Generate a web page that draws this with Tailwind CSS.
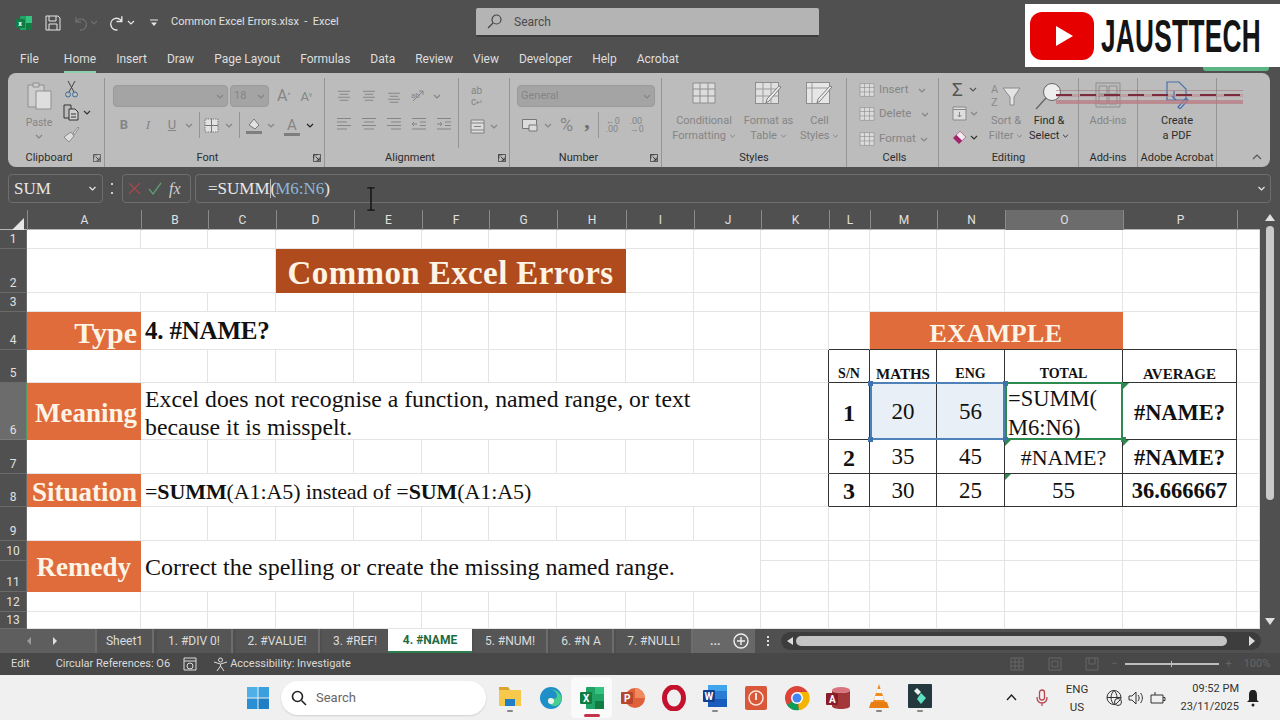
<!DOCTYPE html>
<html lang="en">
<head>
  <meta charset="UTF-8" />
  <title>Common Excel Errors.xlsx - Excel</title>
  <script src="https://cdn.jsdelivr.net/npm/@tailwindcss/browser@4"></script>
</head>
<body class="relative h-[720px] w-[1280px] overflow-hidden bg-[#505050] [font-family:Roboto,sans-serif] text-[12px] text-[#e2e2e2]">

<svg class="absolute h-0 w-0">
  <symbol id="chev" viewBox="0 0 8 5"><path d="M1 1l3 3 3-3" fill="none" stroke="currentColor" stroke-width="1.2"/></symbol>
  <symbol id="launch" viewBox="0 0 9 9"><path d="M.5.5h8v8h-8z M5 1H1v4" fill="none" stroke="currentColor" stroke-width=".8"/><path d="M3 3l4 4M7 4v3H4" fill="none" stroke="currentColor"/></symbol>
  <symbol id="tbl" viewBox="0 0 24 22"><path d="M1 1h22v20H1z" fill="#dcdcdc" stroke="#8d8d8d"/><path d="M1 7h22M1 14h22M8 1v20M16 1v20" stroke="#8d8d8d" fill="none"/></symbol>
  <symbol id="lines" viewBox="0 0 16 14"><path d="M1 1.5h14M1 5h10M1 8.500h14M1 12h10" stroke="currentColor" stroke-width="1.100" fill="none"/></symbol>
  <symbol id="linec" viewBox="0 0 16 14"><path d="M1 1.5h14M3 5h10M1 8.500h14M3 12h10" stroke="currentColor" stroke-width="1.100" fill="none"/></symbol>
  <symbol id="liner" viewBox="0 0 16 14"><path d="M1 1.5h14M5 5h10M1 8.500h14M5 12h10" stroke="currentColor" stroke-width="1.100" fill="none"/></symbol>
</svg>

<!-- title bar -->
<header class="flex h-[44px] items-center pt-[1px]">
  <svg class="ml-[16px] h-[16px] w-[16px]" viewBox="0 0 16 16"><rect x="4" y="1" width="12" height="14" rx="1" fill="#21a366"/><rect x="10" y="1" width="6" height="7" fill="#33c481"/><rect x="10" y="8" width="6" height="7" fill="#107c41"/><rect y="4" width="9" height="9" rx="1" fill="#107c41"/><text x="2.200" y="11" font-size="7" font-weight="700" fill="#fff">x</text></svg>
  <svg class="ml-[13px] h-[16px] w-[16px] text-[#e6e6e6]" viewBox="0 0 16 16" fill="none" stroke="currentColor"><path d="M1 1h12l2 2v12H1z M4 1v5h7V1 M4 15v-6h8v6"/></svg>
  <svg class="ml-[13px] h-[16px] w-[14px] text-[#6f6f6f]" viewBox="0 0 14 16" fill="none" stroke="currentColor" stroke-width="1.300"><path d="M2 2v5h5M2 7a5.500 5.500 0 1 1 4 8"/></svg>
  <svg class="ml-[2px] h-[5px] w-[8px] text-[#6f6f6f]"><use href="#chev"/></svg>
  <svg class="ml-[11px] h-[17px] w-[15px] text-[#e6e6e6]" viewBox="0 0 14 16" fill="none" stroke="currentColor" stroke-width="1.300"><path d="M12 2v5H7M12 7a5.500 5.500 0 1 0-4 8"/></svg>
  <svg class="ml-[3px] h-[5px] w-[8px] text-[#e6e6e6]"><use href="#chev"/></svg>
  <svg class="ml-[15px] h-[8px] w-[8px] text-[#e6e6e6]" viewBox="0 0 8 8"><path d="M0 1h8" stroke="currentColor"/><path d="M1 3.500h6L4 7z" fill="currentColor"/></svg>
  <span class="ml-[13px] w-[305px] text-[11px] whitespace-pre text-[#e0e0e0]">Common Excel Errors.xlsx  -  Excel</span>
  <div class="flex h-[29px] w-[343px] items-center rounded-[2px] border-b-2 border-[#3c3c3c] bg-[#b4b4b4] text-[12px] text-[#4a4a4a]">
    <svg class="ml-[11px] h-[15px] w-[15px]" viewBox="0 0 15 15" fill="none" stroke="#444" stroke-width="1.200"><circle cx="9.500" cy="5.500" r="4.500"/><path d="M6 9l-5 5"/></svg>
    <span class="ml-[12px]">Search</span>
  </div>
</header>

<!-- logo sits over the window corner -->
<div class="absolute left-[1203px] top-[60px] h-[11px] w-[66px] rounded-b-[3px] bg-[#5cb585]"></div>
<div class="absolute left-[1025px] top-[4px] flex h-[63px] w-[255px] items-center overflow-hidden bg-white">
  <svg class="ml-[5px] h-[48px] w-[64px] shrink-0" viewBox="0 0 64 48"><rect width="64" height="48" rx="12" fill="#e60000"/><path d="M26 14l17 10-17 10z" fill="#fff"/></svg>
  <span class="ml-[7px] shrink-0 origin-left scale-x-[0.57] text-[46px] leading-none font-bold tracking-[0.5px] whitespace-nowrap text-[#141414] [font-family:'Liberation_Sans',sans-serif]">JAUSTTECH</span>
</div>

<!-- tabs -->
<nav class="flex h-[29px] items-center gap-[20px] pl-[20px] pt-[1px] text-[12px] text-[#dedede]">
  <span class="mr-[5px]">File</span>
  <span class="relative">Home<span class="absolute -bottom-[5px] left-0 h-[2px] w-full bg-[#8fd0ac]"></span></span>
  <span>Insert</span><span>Draw</span><span>Page Layout</span><span>Formulas</span><span>Data</span><span>Review</span><span>View</span><span>Developer</span><span>Help</span><span>Acrobat</span>
</nav>

<!-- ribbon -->
<section class="relative mx-[8px] flex h-[94px] w-[1262px] rounded-[8px] bg-[#bcbcbc] pt-[5px] text-[11px] text-[#858585]">

  <div class="flex w-[97px] shrink-0 flex-col border-r border-[#959595]">
    <div class="flex h-[73px]">
      <div class="ml-[8px] flex w-[46px] flex-col items-center">
        <svg class="mt-[4px] h-[28px] w-[28px]" viewBox="0 0 28 28" fill="none" stroke="#8f8f8f"><path d="M3 3h16v22H3z" fill="#cdcdcd"/><path d="M8 1h6v4H8z" fill="#cdcdcd"/><path d="M11 9h15v18H11z" fill="#dedede"/></svg>
        <span class="mt-[6px] text-[10.500px] leading-[14px]">Paste</span>
        <svg class="mt-[4px] h-[5px] w-[8px]"><use href="#chev"/></svg>
      </div>
      <div class="flex flex-col pl-[1px]">
        <svg class="mt-[2px] h-[18px] w-[17px] text-[#444]" viewBox="0 0 17 18" fill="none" stroke="currentColor"><path d="M5 1l6 11M12 1l-6 11"/><circle cx="5" cy="14.500" r="2.500" stroke="#3f6d99"/><circle cx="12" cy="14.500" r="2.500" stroke="#3f6d99"/></svg>
        <div class="mt-[6px] flex items-center gap-[4px]">
          <svg class="h-[17px] w-[16px] text-[#333]" viewBox="0 0 16 17" fill="none" stroke="currentColor"><path d="M1 1h7v13H1z"/><path d="M6 5h6l3 3v8H6z" fill="#cfcfcf"/><path d="M8 10h5M8 13h5"/></svg>
          <svg class="h-[5px] w-[8px] text-[#333]"><use href="#chev"/></svg>
        </div>
        <svg class="mt-[5px] h-[17px] w-[17px]" viewBox="0 0 17 17" fill="#dedede" stroke="#8c8c8c"><path d="M10 7l5-6 1 1-5 7z"/><path d="M1 11l7-5 3 4-5 6z"/></svg>
      </div>
    </div>
    <div class="relative h-[14px] pr-[14px] text-center leading-[14px] text-[#2c2c2c]">Clipboard
      <svg class="absolute right-[3px] top-[3px] h-[8px] w-[8px] text-[#444]"><use href="#launch"/></svg>
    </div>
  </div>

  <div class="flex w-[220px] shrink-0 flex-col border-r border-[#959595]">
    <div class="h-[73px]">
      <div class="flex items-center gap-[2px] pl-[8px] pt-[7px]">
        <div class="flex h-[22px] w-[115px] items-center justify-end rounded-[4px] border border-[#9a9a9a] bg-[#a4a4a4] pr-[3px]"><svg class="h-[5px] w-[8px]"><use href="#chev"/></svg></div>
        <div class="flex h-[22px] w-[39px] items-center justify-between rounded-[4px] border border-[#9a9a9a] bg-[#a4a4a4] px-[3px]">18<svg class="h-[5px] w-[8px]"><use href="#chev"/></svg></div>
        <span class="ml-[6px] text-[16px] leading-none">A<sup class="text-[7px]">^</sup></span>
        <span class="ml-[8px] text-[13px] leading-none">A<sup class="text-[7px]">v</sup></span>
      </div>
      <div class="mt-[8px] flex h-[20px] items-center pl-[7px] text-[13px]">
        <span class="w-[24px] text-center font-bold">B</span>
        <span class="w-[24px] text-center italic [font-family:'Liberation_Serif',serif]">I</span>
        <span class="w-[24px] text-center underline">U</span>
        <svg class="ml-[1px] h-[5px] w-[8px]"><use href="#chev"/></svg>
        <span class="ml-[6px] h-[26px] w-px bg-[#959595]"></span>
        <svg class="ml-[4px] h-[15px] w-[15px]" viewBox="0 0 15 15" fill="#e2e2e2" stroke="#777"><path d="M1 1h13v13H1z" stroke-dasharray="1.500 1"/><path d="M7.500 1v13M1 7.500h13"/></svg>
        <svg class="ml-[6px] h-[5px] w-[8px]"><use href="#chev"/></svg>
        <span class="ml-[6px] h-[26px] w-px bg-[#959595]"></span>
        <svg class="ml-[6px] h-[17px] w-[16px]" viewBox="0 0 16 17" fill="#e2e2e2" stroke="#777"><path d="M3 8l5-6 5 6-4 4z"/><path d="M0 14h16v3H0z" fill="#7e7e7e" stroke="none"/></svg>
        <svg class="ml-[5px] h-[5px] w-[8px]"><use href="#chev"/></svg>
        <span class="relative ml-[9px] w-[16px] text-center text-[15px] leading-[15px]">A<span class="absolute -bottom-[3px] left-0 h-[3px] w-full bg-[#7e7e7e]"></span></span>
        <svg class="ml-[6px] h-[5px] w-[8px] text-[#222]"><use href="#chev"/></svg>
      </div>
    </div>
    <div class="relative h-[14px] pr-[14px] text-center leading-[14px] text-[#2c2c2c]">Font
      <svg class="absolute right-[3px] top-[3px] h-[8px] w-[8px]"><use href="#launch"/></svg>
    </div>
  </div>

  <div class="flex w-[185px] shrink-0 flex-col border-r border-[#959595]">
    <div class="flex h-[73px]">
      <div class="mb-[3px] flex w-[134px] flex-col border-r border-[#959595] text-[#858585]">
        <div class="flex items-center gap-[9px] pl-[11px] pt-[10px]">
          <svg class="h-[12px] w-[16px]"><use href="#linec"/></svg>
          <svg class="h-[12px] w-[16px]"><use href="#linec"/></svg>
          <svg class="mt-[4px] h-[12px] w-[16px]"><use href="#linec"/></svg>
          <svg class="h-[14px] w-[16px]" viewBox="0 0 16 14" fill="none" stroke="currentColor"><path d="M2 12L12 2M8 2h4v4"/><text x="0" y="9" font-size="8" fill="currentColor" stroke="none">ab</text></svg>
          <svg class="-ml-[3px] h-[5px] w-[8px]"><use href="#chev"/></svg>
        </div>
        <div class="mt-[13px] flex items-center gap-[9px] pl-[11px]">
          <svg class="h-[14px] w-[16px]"><use href="#lines"/></svg>
          <svg class="h-[14px] w-[16px]"><use href="#linec"/></svg>
          <svg class="h-[14px] w-[16px]"><use href="#liner"/></svg>
          <svg class="h-[14px] w-[16px]" viewBox="0 0 16 14" fill="none" stroke="currentColor"><path d="M1 1.500h14M9 5h6M9 8.500h6M1 12h14M6 7H1M3 5L1 7l2 2"/></svg>
          <svg class="h-[14px] w-[16px]" viewBox="0 0 16 14" fill="none" stroke="currentColor"><path d="M1 1.500h14M9 5h6M9 8.500h6M1 12h14M1 7h5M4 5l2 2-2 2"/></svg>
        </div>
      </div>
      <div class="flex flex-col pl-[11px]">
        <div class="mt-[7px] ml-[1px] text-[10px] leading-[11px]">ab<br>c<span class="text-[8px]">↵</span></div>
        <div class="mt-[11px] flex items-center gap-[5px]">
          <svg class="h-[15px] w-[15px]" viewBox="0 0 15 15" fill="#dcdcdc" stroke="#808080"><path d="M1 1h13v13H1z"/><path d="M1 4h13M1 11h13M4 7.500h7"/></svg>
          <svg class="h-[5px] w-[8px]"><use href="#chev"/></svg>
        </div>
      </div>
    </div>
    <div class="relative h-[14px] pr-[14px] text-center leading-[14px] text-[#2c2c2c]">Alignment
      <svg class="absolute right-[3px] top-[3px] h-[8px] w-[8px]"><use href="#launch"/></svg>
    </div>
  </div>

  <div class="flex w-[152px] shrink-0 flex-col border-r border-[#959595]">
    <div class="h-[73px] pl-[7px] pr-[6px]">
      <div class="mt-[7px] flex h-[22px] items-center justify-between rounded-[4px] border border-[#9a9a9a] bg-[#a4a4a4] px-[3px]">General<svg class="h-[5px] w-[8px]"><use href="#chev"/></svg></div>
      <div class="mt-[8px] flex h-[20px] items-center">
        <svg class="ml-[5px] h-[13px] w-[16px]" viewBox="0 0 16 13" fill="#dcdcdc" stroke="#777"><path d="M.5.500h14v9H.5z"/><path d="M7 6h8v6H7z"/></svg>
        <svg class="ml-[6px] h-[5px] w-[8px]"><use href="#chev"/></svg>
        <span class="ml-[8px] text-[18px] leading-none">%</span>
        <span class="ml-[11px] -translate-y-[4px] text-[22px] leading-none font-bold text-[#6e6e6e] [font-family:'Liberation_Serif',serif]">,</span>
        <span class="ml-[8px] h-[26px] w-px bg-[#959595]"></span>
        <span class="ml-[7px] w-[16px] text-[9px] leading-[8px]">←0<br>.00</span>
        <span class="ml-[8px] w-[16px] text-[9px] leading-[8px]">.00<br>→0</span>
      </div>
    </div>
    <div class="relative h-[14px] pr-[14px] text-center leading-[14px] text-[#2c2c2c]">Number
      <svg class="absolute right-[3px] top-[3px] h-[8px] w-[8px]"><use href="#launch"/></svg>
    </div>
  </div>

  <div class="flex w-[185px] shrink-0 flex-col border-r border-[#959595]">
    <div class="flex h-[73px] pl-[3px] text-center leading-[15px]">
      <div class="flex w-[78px] flex-col items-center">
        <svg class="mt-[4px] h-[22px] w-[26px]"><use href="#tbl"/></svg>
        <span class="mt-[9px] whitespace-nowrap">Conditional</span>
        <span class="whitespace-nowrap">Formatting <svg class="inline h-[4px] w-[7px]"><use href="#chev"/></svg></span>
      </div>
      <div class="flex w-[51px] flex-col items-center">
        <svg class="mt-[4px] h-[22px] w-[28px]" viewBox="0 0 28 22"><rect x=".5" y=".5" width="23" height="21" fill="#e0e0e0" stroke="#8d8d8d"/><path d="M1 7h22M1 14h22M8 1v20M16 1v20" stroke="#9a9a9a"/><path d="M26 5L14 19l-3 2 1-4L24 4z" fill="#eee" stroke="#7d7d7d"/></svg>
        <span class="mt-[9px] whitespace-nowrap">Format as</span>
        <span class="whitespace-nowrap">Table <svg class="inline h-[4px] w-[7px]"><use href="#chev"/></svg></span>
      </div>
      <div class="flex w-[51px] flex-col items-center">
        <svg class="mt-[4px] h-[22px] w-[28px]" viewBox="0 0 28 22"><rect x=".5" y=".5" width="23" height="21" fill="#e6e6e6" stroke="#8d8d8d"/><path d="M1 6h22M6 1v20" stroke="#9a9a9a"/><path d="M26 5L14 19l-3 2 1-4L24 4z" fill="#eee" stroke="#7d7d7d"/></svg>
        <span class="mt-[9px]">Cell</span>
        <span class="whitespace-nowrap">Styles <svg class="inline h-[4px] w-[7px]"><use href="#chev"/></svg></span>
      </div>
    </div>
    <div class="h-[14px] text-center leading-[14px] text-[#2c2c2c]">Styles</div>
  </div>

  <div class="flex w-[92px] shrink-0 flex-col border-r border-[#959595]">
    <div class="flex h-[73px] flex-col pl-[12px] pt-[4px] text-[11.500px]">
      <div class="flex h-[16px] items-center gap-[4px]"><svg class="h-[14px] w-[16px]"><use href="#tbl"/></svg>Insert<svg class="ml-[6px] h-[5px] w-[8px]"><use href="#chev"/></svg></div>
      <div class="mt-[8px] flex h-[16px] items-center gap-[4px]"><svg class="h-[14px] w-[16px]"><use href="#tbl"/></svg>Delete<svg class="ml-[6px] h-[5px] w-[8px]"><use href="#chev"/></svg></div>
      <div class="mt-[9px] flex h-[16px] items-center gap-[4px]"><svg class="h-[14px] w-[16px]"><use href="#tbl"/></svg>Format<svg class="h-[5px] w-[8px]"><use href="#chev"/></svg></div>
    </div>
    <div class="h-[14px] pl-[4px] text-center leading-[14px] text-[#2c2c2c]">Cells</div>
  </div>

  <div class="flex w-[140px] shrink-0 flex-col border-r border-[#959595]">
    <div class="flex h-[73px]">
      <div class="flex w-[45px] flex-col pl-[13px] pt-[1px]">
        <div class="flex h-[20px] items-center gap-[3px] text-[#555]"><span class="w-[14px] text-[19px] leading-none">Σ</span><svg class="h-[5px] w-[8px]"><use href="#chev"/></svg></div>
        <div class="mt-[5px] flex h-[18px] items-center gap-[3px]"><svg class="h-[15px] w-[15px]" viewBox="0 0 15 15" fill="#ddd" stroke="#888"><path d="M1 1h13v13H1z"/><path d="M1 3.500h13M7.500 6v5M5.500 9l2 2 2-2" fill="none"/></svg><svg class="h-[5px] w-[8px]"><use href="#chev"/></svg></div>
        <div class="mt-[6px] flex h-[18px] items-center gap-[3px] text-[#333]"><svg class="h-[15px] w-[15px]" viewBox="0 0 15 15"><path d="M1 8l7-7 6 6-7 7z" fill="#a3236e"/><path d="M4.500 5L8 1.500 13.500 7 10 10.500z" fill="#eee"/></svg><svg class="h-[5px] w-[8px]"><use href="#chev"/></svg></div>
      </div>
      <div class="flex w-[44px] flex-col items-center text-center leading-[15px]">
        <svg class="mt-[5px] h-[26px] w-[36px]" viewBox="0 0 36 26" fill="none" stroke="#8a8a8a"><text x="3" y="10" font-size="11" fill="#8a8a8a" stroke="none">A</text><text x="3" y="23" font-size="11" fill="#8a8a8a" stroke="none">Z</text><path d="M15 5h17l-6 9v8h-4v-8z" fill="#e4e4e4"/></svg>
        <span class="mt-[4px]">Sort &amp;</span>
        <span class="whitespace-nowrap">Filter <svg class="inline h-[4px] w-[7px]"><use href="#chev"/></svg></span>
      </div>
      <div class="flex w-[42px] flex-col items-center text-center leading-[15px] text-[#2c2c2c]">
        <svg class="mt-[4px] h-[28px] w-[30px]" viewBox="0 0 30 28"><circle cx="18" cy="10" r="8.500" fill="#eee" stroke="#666"/><path d="M12 16L2 27" stroke="#666" stroke-width="1.300"/></svg>
        <span class="mt-[3px] whitespace-nowrap">Find &amp;</span>
        <span class="whitespace-nowrap">Select <svg class="inline h-[4px] w-[7px]"><use href="#chev"/></svg></span>
      </div>
    </div>
    <div class="h-[14px] text-center leading-[14px] text-[#2c2c2c]">Editing</div>
  </div>

  <div class="flex w-[59px] shrink-0 flex-col border-r border-[#959595]">
    <div class="flex h-[73px] flex-col items-center">
      <svg class="mt-[4px] h-[26px] w-[26px]" viewBox="0 0 26 26" fill="none" stroke="#8d8d8d"><path d="M1 1h24v24H1z"/><path d="M4 4h8v8H4zM14 4h8v8h-8zM4 14h8v8H4zM14 14h8v8h-8z"/></svg>
      <span class="mt-[5px] leading-[15px]">Add-ins</span>
    </div>
    <div class="h-[14px] text-center leading-[14px] text-[#2c2c2c]">Add-ins</div>
  </div>

  <div class="flex w-[79px] shrink-0 flex-col border-r border-[#959595]">
    <div class="flex h-[73px] flex-col items-center text-[#2c2c2c]">
      <svg class="mt-[3px] h-[28px] w-[24px]" viewBox="0 0 24 28" fill="none" stroke="#4a6fae" stroke-width="1.200"><path d="M2 1h12l7 7v11H2z"/><path d="M9 10v8M7 15l4 4M13 26l8-9 2 2-8 9z"/></svg>
      <span class="mt-[4px] leading-[15px]">Create</span>
      <span class="leading-[15px]">a PDF</span>
    </div>
    <div class="h-[14px] text-center leading-[14px] whitespace-nowrap text-[#2c2c2c]">Adobe Acrobat</div>
  </div>

  <svg class="ml-auto mr-[8px] mt-[76px] h-[6px] w-[10px] text-[#555]" viewBox="0 0 10 6"><path d="M1 5l4-4 4 4" fill="none" stroke="currentColor" stroke-width="1.200"/></svg>

  <!-- red ink dashes on top of the ribbon -->
  <div class="absolute left-[1048px] top-[17px] h-[15px] w-[187px]">
    <div class="h-px w-full bg-[#a06a70]/50"></div>
    <div class="mt-[3px] h-[3px] w-full bg-[#b9787f]/40"><div class="h-[2px] w-full bg-[repeating-linear-gradient(90deg,#7c2b3c_0_16px,transparent_16px_24px)]"></div></div>
    <div class="mt-[3px] h-[4px] w-full bg-[#b9787f]/70"></div>
  </div>
</section>

<!-- formula bar -->
<div class="flex h-[43px] items-center pl-[8px] [font-family:'Liberation_Serif',serif]">
  <div class="flex h-[29px] w-[95px] items-center justify-between rounded-[4px] border border-[#6e6e6e] px-[5px] text-[17px] text-[#e8e8e8]">SUM<svg class="h-[5px] w-[9px]"><use href="#chev"/></svg></div>
  <span class="ml-[8px] h-[11px] w-[2px] border-y-2 border-[#d0d0d0]"></span>
  <div class="ml-[9px] flex h-[29px] w-[69px] items-center gap-[7px] rounded-[4px] border border-[#6e6e6e] pl-[5px]">
    <svg class="h-[13px] w-[13px]" viewBox="0 0 13 13" stroke="#a8474c" stroke-width="1.300"><path d="M1 1l11 11M12 1L1 12"/></svg>
    <svg class="h-[13px] w-[14px]" viewBox="0 0 14 13" fill="none" stroke="#5f9c74" stroke-width="1.300"><path d="M1 7l4 5 8-11"/></svg>
    <span class="text-[16px] text-[#cfcfcf] italic">fx</span>
  </div>
  <div class="relative ml-[4px] flex h-[29px] w-[1076px] items-center justify-between rounded-[4px] border border-[#6e6e6e] pl-[12px] pr-[4px] text-[17px] text-[#e8e8e8]">
    <span>=SUMM<span class="mr-[-1px] border-l border-[#bbb]">(</span><span class="text-[#8bb6d9]">M6:N6</span>)</span>
    <svg class="h-[5px] w-[9px]"><use href="#chev"/></svg>
    <svg class="absolute left-[170px] top-[12px] h-[24px] w-[10px]" viewBox="0 0 10 26" fill="none" stroke="#111" stroke-width="1.500"><path d="M1 1h8M5 1v24M1 25h8"/></svg>
  </div>
</div>

<!-- sheet -->
<div class="flex h-[419px]">
  <div class="w-[1260px] shrink-0">
    <div class="grid h-[20px] grid-cols-[27px_114px_67px_68px_78px_68px_67px_68px_69px_68px_67px_68px_41px_67px_68px_118px_114px_23px] border-b border-[#b5b5b5] text-center leading-[20px] text-[#e0e0e0] [&>span]:border-l [&>span]:border-[#8a8a8a]">
      <div class="relative"><span class="absolute bottom-[2px] right-[3px] h-0 w-0 border-b-[12px] border-l-[12px] border-b-[#e6e6e6] border-l-transparent"></span></div>
      <span>A</span><span>B</span><span>C</span><span>D</span><span>E</span><span>F</span><span>G</span><span>H</span><span>I</span><span>J</span><span>K</span><span>L</span><span>M</span><span>N</span>
      <span class="border-b-2 border-b-[#4f9a6a] bg-[#6c6c6c]">O</span><span>P</span><span></span>
    </div>

    <div class="relative grid h-[399px] grid-cols-[27px_114px_67px_68px_78px_68px_67px_68px_69px_68px_67px_68px_41px_67px_68px_118px_114px_23px] grid-rows-[19px_44px_19px_38px_33px_57px_34px_33px_34px_20px_31px_20px_17px] bg-white [font-family:'Liberation_Serif',serif] text-[#111] [&>div]:min-w-0 [&>div]:border-r [&>div]:border-b [&>div]:border-[#e4e4e4]">
      <!-- 1 -->
      <div class="flex items-end justify-center border-[#6a6a6a]! bg-[#505050] [font-family:Roboto,sans-serif] text-[12px] leading-[18px] text-[#e0e0e0]">1</div>
      <div></div><div></div><div></div><div></div><div></div><div></div><div></div><div></div><div></div><div></div><div></div><div></div><div></div><div></div><div></div><div></div><div></div>
      <!-- 2 -->
      <div class="flex items-end justify-center border-[#6a6a6a]! bg-[#505050] [font-family:Roboto,sans-serif] text-[12px] leading-[18px] text-[#e0e0e0]">2</div>
      <div class="col-span-3"></div>
      <div class="col-span-5 flex items-center justify-center border-transparent! bg-[#b04b1d] pt-[6px] text-[33px] font-bold tracking-[0.4px] text-[#fdf4e6]">Common Excel Errors</div>
      <div></div><div></div><div></div><div></div><div></div><div></div><div></div><div></div><div></div>
      <!-- 3 -->
      <div class="flex items-end justify-center border-[#6a6a6a]! bg-[#505050] [font-family:Roboto,sans-serif] text-[12px] leading-[18px] text-[#e0e0e0]">3</div>
      <div></div><div></div><div></div><div></div><div></div><div></div><div></div><div></div><div></div><div></div><div></div><div></div><div></div><div></div><div></div><div></div><div></div>
      <!-- 4 -->
      <div class="flex items-end justify-center border-[#6a6a6a]! bg-[#505050] [font-family:Roboto,sans-serif] text-[12px] leading-[18px] text-[#e0e0e0]">4</div>
      <div class="flex items-center justify-end border-transparent! bg-[#df6c3a] pr-[3px] pt-[5px] text-[30px] leading-none font-bold text-[#fdf4e6]">Type</div>
      <div class="col-span-3 flex items-center pl-[4px] pt-[1px] text-[25px] font-bold tracking-[-0.2px]">4. #NAME?</div>
      <div></div><div></div><div></div><div></div><div></div><div></div><div></div><div class="border-b-[#333]!"></div>
      <div class="col-span-3 flex items-center justify-center border-transparent! border-b-[#333]! bg-[#df6c3a] pt-[7px] text-[26px] leading-none font-bold tracking-[0.4px] text-[#fdf4e6]">EXAMPLE</div>
      <div class="border-b-[#333]!"></div><div></div>
      <!-- 5 -->
      <div class="flex items-end justify-center border-[#6a6a6a]! bg-[#505050] [font-family:Roboto,sans-serif] text-[12px] leading-[18px] text-[#e0e0e0]">5</div>
      <div></div><div></div><div></div><div></div><div></div><div></div><div></div><div></div><div></div><div></div>
      <div class="border-r-[#333]!"></div>
      <div class="flex items-end justify-center border-r-[#333]! border-b-[#333]! text-[14px] leading-[16px] font-bold">S/N</div>
      <div class="flex items-end justify-center border-r-[#333]! border-b-[#333]! text-[15px] leading-[16px] font-bold">MATHS</div>
      <div class="flex items-end justify-center border-r-[#333]! border-b-[#333]! text-[14px] leading-[16px] font-bold">ENG</div>
      <div class="flex items-end justify-center border-r-[#333]! border-b-[#333]! text-[14px] leading-[16px] font-bold">TOTAL</div>
      <div class="flex items-end justify-center border-r-[#333]! border-b-[#333]! text-[15px] leading-[16px] font-bold">AVERAGE</div>
      <div></div>
      <!-- 6 -->
      <div class="flex items-end justify-center border-r-[#4f9a6a]! border-b-[#7a7a7a]! bg-[#6c6c6c] [font-family:Roboto,sans-serif] text-[12px] leading-[18px] text-[#e0e0e0]">6</div>
      <div class="flex items-center justify-end border-transparent! bg-[#df6c3a] pr-[3px] pt-[5px] text-[27px] leading-none font-bold text-[#fdf4e6]">Meaning</div>
      <div class="col-span-9 flex items-center pl-[4px] pt-[3px] text-[23.750px] leading-[28px]"><span>Excel does not recognise a function, named range, or text<br>because it is misspelt.</span></div>
      <div class="border-r-[#333]!"></div>
      <div class="flex items-center justify-center border-r-[#333]! border-b-[#333]! pt-[3px] text-[24px] font-bold">1</div>
      <div class="flex items-center justify-center border-r-[#333]! border-b-[#333]! bg-[#e8eff7] pt-[3px] text-[23px]">20</div>
      <div class="flex items-center justify-center border-r-[#333]! border-b-[#333]! bg-[#e8eff7] pt-[3px] text-[23px]">56</div>
      <div class="flex items-center border-r-[#333]! border-b-[#333]! pl-[3px] pt-[3px] text-[22.500px] leading-[29px]"><span>=SUMM(<br>M6:N6)</span></div>
      <div class="flex items-center justify-center border-r-[#333]! border-b-[#333]! pt-[3px] text-[22.500px] font-bold">#NAME?</div>
      <div></div>
      <!-- 7 -->
      <div class="flex items-end justify-center border-[#6a6a6a]! bg-[#505050] [font-family:Roboto,sans-serif] text-[12px] leading-[18px] text-[#e0e0e0]">7</div>
      <div></div><div></div><div></div><div></div><div></div><div></div><div></div><div></div><div></div><div></div>
      <div class="border-r-[#333]!"></div>
      <div class="flex items-center justify-center border-r-[#333]! border-b-[#333]! pt-[2px] text-[24px] font-bold">2</div>
      <div class="flex items-center justify-center border-r-[#333]! border-b-[#333]! pt-[2px] text-[23px]">35</div>
      <div class="flex items-center justify-center border-r-[#333]! border-b-[#333]! pt-[2px] text-[23px]">45</div>
      <div class="flex items-center justify-center border-r-[#333]! border-b-[#333]! pt-[2px] text-[22px]">#NAME?</div>
      <div class="flex items-center justify-center border-r-[#333]! border-b-[#333]! pt-[2px] text-[22.500px] font-bold">#NAME?</div>
      <div></div>
      <!-- 8 -->
      <div class="flex items-end justify-center border-[#6a6a6a]! bg-[#505050] [font-family:Roboto,sans-serif] text-[12px] leading-[18px] text-[#e0e0e0]">8</div>
      <div class="flex items-center justify-end border-transparent! bg-[#df6c3a] pr-[3px] pt-[4px] text-[27px] leading-none font-bold text-[#fdf4e6]">Situation</div>
      <div class="col-span-9 flex items-center pl-[4px] pt-[2px] text-[22px] tracking-[-0.1px]"><span>=<b>SUMM</b>(A1:A5) instead of =<b>SUM</b>(A1:A5)</span></div>
      <div class="border-r-[#333]!"></div>
      <div class="flex items-center justify-center border-r-[#333]! border-b-[#333]! pt-[2px] text-[24px] font-bold">3</div>
      <div class="flex items-center justify-center border-r-[#333]! border-b-[#333]! pt-[2px] text-[23px]">30</div>
      <div class="flex items-center justify-center border-r-[#333]! border-b-[#333]! pt-[2px] text-[23px]">25</div>
      <div class="flex items-center justify-center border-r-[#333]! border-b-[#333]! pt-[2px] text-[23px]">55</div>
      <div class="flex items-center justify-center border-r-[#333]! border-b-[#333]! pt-[2px] text-[22.500px] font-bold">36.666667</div>
      <div></div>
      <!-- 9 -->
      <div class="flex items-end justify-center border-[#6a6a6a]! bg-[#505050] [font-family:Roboto,sans-serif] text-[12px] leading-[18px] text-[#e0e0e0]">9</div>
      <div></div><div></div><div></div><div></div><div></div><div></div><div></div><div></div><div></div><div></div><div></div><div></div><div></div><div></div><div></div><div></div><div></div>
      <!-- 10 -->
      <div class="flex items-end justify-center border-[#6a6a6a]! bg-[#505050] [font-family:Roboto,sans-serif] text-[12px] leading-[18px] text-[#e0e0e0]">10</div>
      <div class="row-span-2 flex items-center justify-end border-transparent! bg-[#df6c3a] pr-[9px] pt-[3px] text-[27px] leading-none font-bold text-[#fdf4e6]">Remedy</div>
      <div class="col-span-9 row-span-2 flex items-center pl-[4px] pt-[1px] text-[24px]">Correct the spelling or create the missing named range.</div>
      <div></div><div></div><div></div><div></div><div></div><div></div><div></div>
      <!-- 11 -->
      <div class="flex items-end justify-center border-[#6a6a6a]! bg-[#505050] [font-family:Roboto,sans-serif] text-[12px] leading-[18px] text-[#e0e0e0]">11</div>
      <div></div><div></div><div></div><div></div><div></div><div></div><div></div>
      <!-- 12 -->
      <div class="flex items-end justify-center border-[#6a6a6a]! bg-[#505050] [font-family:Roboto,sans-serif] text-[12px] leading-[18px] text-[#e0e0e0]">12</div>
      <div></div><div></div><div></div><div></div><div></div><div></div><div></div><div></div><div></div><div></div><div></div><div></div><div></div><div></div><div></div><div></div><div></div>
      <!-- 13 -->
      <div class="flex items-end justify-center border-[#6a6a6a]! bg-[#505050] [font-family:Roboto,sans-serif] text-[12px] leading-[16px] text-[#e0e0e0]">13</div>
      <div></div><div></div><div></div><div></div><div></div><div></div><div></div><div></div><div></div><div></div><div></div><div></div><div></div><div></div><div></div><div></div><div></div>

      <!-- range highlights over the cells -->
      <span class="absolute inset-0 col-start-14 col-end-16 row-start-6 row-end-7 -mt-[1px] border-2 border-[#4e81b8]"></span>
      <span class="absolute inset-0 col-start-16 col-end-17 row-start-6 row-end-7 -mt-[1px] border-2 border-[#2f8a4f]"></span>
      <span class="absolute left-[868px] top-[151px] h-[5px] w-[5px] bg-[#3f72a8]"></span>
      <span class="absolute left-[1003px] top-[151px] h-[5px] w-[5px] bg-[#3f72a8]"></span>
      <span class="absolute left-[868px] top-[207px] h-[5px] w-[5px] bg-[#3f72a8]"></span>
      <span class="absolute left-[1003px] top-[207px] h-[5px] w-[5px] bg-[#3f72a8]"></span>
      <span class="absolute left-[1121px] top-[207px] h-[5px] w-[5px] bg-[#2f8a4f]"></span>
      <span class="absolute left-[1123px] top-[153px] h-0 w-0 border-t-[6px] border-r-[6px] border-t-[#2f8a4f] border-r-transparent"></span>
      <span class="absolute left-[1123px] top-[210px] h-0 w-0 border-t-[6px] border-r-[6px] border-t-[#2f8a4f] border-r-transparent"></span>
      <span class="absolute left-[1005px] top-[210px] h-0 w-0 border-t-[6px] border-r-[6px] border-t-[#2f8a4f] border-r-transparent"></span>
      <span class="absolute left-[1005px] top-[244px] h-0 w-0 border-t-[6px] border-r-[6px] border-t-[#2f8a4f] border-r-transparent"></span>
    </div>
  </div>

  <!-- vertical scrollbar -->
  <div class="flex w-[20px] flex-col items-center bg-[#505050] pt-[4px]">
    <span class="h-0 w-0 border-x-[5px] border-b-[7px] border-x-transparent border-b-[#e0e0e0]"></span>
    <span class="mt-[5px] h-[274px] w-[8px] rounded-full bg-[#c9c9c9]"></span>
    <span class="mt-auto mb-[4px] h-0 w-0 border-x-[5px] border-t-[7px] border-x-transparent border-t-[#e0e0e0]"></span>
  </div>
</div>

<!-- sheet tabs -->
<div class="flex h-[24px] items-stretch bg-[#505050] text-[12px] text-[#dcdcdc]">
  <div class="flex w-[95px] items-center bg-[#5e5e5e] pl-[27px]">
    <span class="h-0 w-0 border-y-[4px] border-r-[4px] border-y-transparent border-r-[#9a9a9a]"></span>
    <span class="ml-[22px] h-0 w-0 border-y-[4px] border-l-[4px] border-y-transparent border-l-[#e0e0e0]"></span>
  </div>
  <div class="flex w-[59px] items-center justify-center border-x-2 border-[#6c6c6c] bg-[#555]">Sheet1</div>
  <div class="ml-[3px] flex w-[76px] items-center justify-center border-r-2 border-[#6c6c6c] bg-[#555]">1. #DIV 0!</div>
  <div class="ml-[3px] flex w-[84px] items-center justify-center border-r-2 border-[#6c6c6c] bg-[#555]">2. #VALUE!</div>
  <div class="ml-[2px] flex w-[66px] items-center justify-center bg-[#555]">3. #REF!</div>
  <div class="flex w-[84px] items-center justify-center border-b-2 border-[#2f7d4f] bg-white font-bold text-[#1e6b40]">4. #NAME</div>
  <div class="ml-[2px] flex w-[74px] items-center justify-center border-r-2 border-[#6c6c6c] bg-[#555]">5. #NUM!</div>
  <div class="ml-[2px] flex w-[64px] items-center justify-center border-r-2 border-[#6c6c6c] bg-[#555]">6. #N A</div>
  <div class="ml-[2px] flex w-[77px] items-center justify-center border-r-2 border-[#6c6c6c] bg-[#555]">7. #NULL!</div>
  <div class="flex w-[62px] items-center bg-[#686868] pl-[17px]">
    <span class="font-bold">...</span>
    <svg class="ml-[13px] h-[16px] w-[16px]" viewBox="0 0 16 16" fill="none" stroke="#eee" stroke-width="1.400"><circle cx="8" cy="8" r="7"/><path d="M8 4v8M4 8h8"/></svg>
  </div>
  <div class="ml-[12px] flex w-[2px] flex-col justify-center gap-[2px]"><i class="h-[2px] bg-[#ddd]"></i><i class="h-[2px] bg-[#ddd]"></i><i class="h-[2px] bg-[#ddd]"></i></div>
  <div class="my-[3px] ml-[12px] flex w-[480px] items-center rounded-full bg-[#3d3d3d] px-[6px]">
    <span class="h-0 w-0 border-y-[4px] border-r-[6px] border-y-transparent border-r-[#ddd]"></span>
    <span class="ml-[3px] h-[10px] w-[431px] rounded-full bg-[#c4c4c4]"></span>
    <span class="ml-auto h-0 w-0 border-y-[5px] border-l-[6px] border-y-transparent border-l-[#ddd]"></span>
  </div>
</div>

<!-- status bar -->
<div class="flex h-[22px] items-center whitespace-nowrap bg-[#484848] text-[11px] text-[#dadada]">
  <span class="ml-[11px] shrink-0">Edit</span>
  <span class="ml-[26px] shrink-0">Circular References: O6</span>
  <svg class="ml-[13px] h-[14px] w-[14px] shrink-0" viewBox="0 0 14 14" fill="none" stroke="#ddd"><path d="M1 1h12v12H1zM1 4h12"/><circle cx="7" cy="9" r="3"/></svg>
  <svg class="ml-[16px] h-[15px] w-[15px] shrink-0" viewBox="0 0 15 15" fill="none" stroke="#ddd"><circle cx="7.500" cy="3" r="2"/><path d="M1 5l6.500 2L14 5M7.500 7v2M4 14l3.500-5L11 14"/></svg>
  <span class="ml-[2px] w-[118px] shrink-0">Accessibility: Investigate</span>
  <svg class="ml-[662px] h-[14px] w-[14px] shrink-0" viewBox="0 0 14 14" fill="none" stroke="#666"><path d="M1 1h12v12H1zM5 1v12M9 1v12M1 5h12M1 9h12"/></svg>
  <svg class="ml-[24px] h-[14px] w-[14px] shrink-0" viewBox="0 0 14 14" fill="none" stroke="#666"><path d="M1 1h12v12H1zM4 4h6v6H4z"/></svg>
  <svg class="ml-[23px] h-[14px] w-[14px] shrink-0" viewBox="0 0 14 14" fill="none" stroke="#666"><path d="M1 1h12v12H1zM4 1v6h6V1"/></svg>
  <span class="ml-[12px] text-[#666]">−</span>
  <div class="relative ml-[8px] h-[2px] w-[94px] bg-[#bdbdbd]"><span class="absolute left-[46px] -top-[2px] h-[6px] w-px bg-[#bdbdbd]"></span></div>
  <span class="ml-[6px] text-[#666]">+</span>
  <span class="ml-[12px] text-[#666]">100%</span>
</div>

<!-- taskbar -->
<footer class="flex h-[45px] items-center bg-[#f0f0f0] text-[#333]">
  <svg class="ml-[247px] h-[22px] w-[22px]" viewBox="0 0 22 22"><path d="M0 0h10.500v10.500H0z" fill="#4fb0e8"/><path d="M11.500 0H22v10.500H11.500z" fill="#3a9fdf"/><path d="M0 11.500h10.500V22H0z" fill="#2b8fd4"/><path d="M11.500 11.500H22V22H11.500z" fill="#1f7fc4"/></svg>
  <div class="ml-[12px] flex h-[34px] w-[205px] items-center rounded-full bg-white text-[13px] text-[#666] shadow-[0_1px_2px_#0002]">
    <svg class="ml-[10px] h-[16px] w-[16px]" viewBox="0 0 16 16" fill="none" stroke="#222" stroke-width="1.600"><circle cx="6.500" cy="6.500" r="5"/><path d="M10.500 10.500L15 15"/></svg>
    <span class="ml-[9px]">Search</span>
  </div>
  <div class="ml-[3px] flex items-center">
    <div class="flex h-[45px] w-[41px] flex-col items-center justify-center">
      <svg class="h-[24px] w-[24px]" viewBox="0 0 24 24"><path d="M1 3h9l2 3h11v16H1z" fill="#f6c94c"/><path d="M1 3h9l2 3H1z" fill="#d9a52e"/><path d="M7 15h10v7H7z" fill="#1f7fc4"/></svg>
      <span class="mt-[2px] h-[2px] w-[6px] rounded bg-[#888]"></span>
    </div>
    <div class="flex h-[45px] w-[41px] items-center justify-center">
      <svg class="h-[24px] w-[24px]" viewBox="0 0 24 24"><circle cx="12" cy="12" r="11" fill="#1e8fc9"/><path d="M23 13c-1-7-8-11-14-9 5-1 9 2 9 6 0 2-2 3-4 3-3 0-5-2-5 1s4 7 8 6c3-1 5-4 6-7z" fill="#48d18e"/><circle cx="12" cy="15" r="3" fill="#f0f0f0"/></svg>
    </div>
    <div class="relative flex h-[41px] w-[41px] items-center justify-center rounded-[4px] bg-[#fafafa]">
      <svg class="h-[24px] w-[24px]" viewBox="0 0 24 24"><rect x="6" y="1" width="18" height="22" rx="1" fill="#21a366"/><rect x="15" y="1" width="9" height="7" fill="#33c481"/><rect x="15" y="15" width="9" height="8" fill="#107c41"/><rect y="6" width="12" height="12" rx="1" fill="#107c41"/><text x="3" y="15.500" font-size="10" font-weight="700" fill="#fff">X</text></svg>
      <span class="absolute bottom-[1px] h-[3px] w-[16px] rounded bg-[#c4314b]"></span>
    </div>
    <div class="flex h-[45px] w-[41px] items-center justify-center">
      <svg class="h-[24px] w-[24px]" viewBox="0 0 24 24"><circle cx="14" cy="12" r="10" fill="#e0603a"/><path d="M14 2a10 10 0 0 1 10 10H14z" fill="#f08a5d"/><rect y="6" width="12" height="12" rx="1" fill="#b7472a"/><text x="3" y="15.500" font-size="10" font-weight="700" fill="#fff">P</text></svg>
    </div>
    <div class="flex h-[45px] w-[41px] items-center justify-center">
      <svg class="h-[26px] w-[24px]" viewBox="0 0 24 26"><ellipse cx="12" cy="13" rx="9.500" ry="11" fill="none" stroke="#c4122e" stroke-width="5"/></svg>
    </div>
    <div class="flex h-[45px] w-[41px] flex-col items-center justify-center">
      <svg class="h-[24px] w-[24px]" viewBox="0 0 24 24"><rect x="5" y="1" width="19" height="6" fill="#41a5ee"/><rect x="5" y="7" width="19" height="8" fill="#2b7cd3"/><rect x="5" y="15" width="19" height="8" fill="#185abd"/><rect y="6" width="12" height="12" rx="1" fill="#103f91"/><text x="1.500" y="15.500" font-size="10" font-weight="700" fill="#fff">W</text></svg>
      <span class="mt-[2px] h-[2px] w-[6px] rounded bg-[#888]"></span>
    </div>
    <div class="flex h-[45px] w-[41px] items-center justify-center">
      <svg class="h-[24px] w-[22px]" viewBox="0 0 22 24"><rect width="22" height="24" rx="2" fill="#d9583a"/><circle cx="11" cy="12" r="7" fill="none" stroke="#fbe3da" stroke-width="1.500"/><path d="M11 7v7" stroke="#fbe3da" stroke-width="2"/></svg>
    </div>
    <div class="flex h-[45px] w-[41px] items-center justify-center">
      <svg class="h-[26px] w-[26px]" viewBox="0 0 26 26"><circle cx="13" cy="13" r="12" fill="#db4437"/><path d="M13 13L3 20a12 12 0 0 0 12 5z" fill="#0f9d58"/><path d="M13 7h11a12 12 0 0 1-9 18z" fill="#f4b400"/><circle cx="13" cy="13" r="6" fill="#fff"/><circle cx="13" cy="13" r="4.500" fill="#4285f4"/></svg>
    </div>
    <div class="flex h-[45px] w-[41px] items-center justify-center">
      <svg class="h-[24px] w-[24px]" viewBox="0 0 24 24"><ellipse cx="15" cy="4" rx="9" ry="3" fill="#d9757f"/><path d="M6 4v16c0 2 4 3 9 3s9-1 9-3V4c0 2-4 3-9 3S6 6 6 4z" fill="#a4373a"/><rect y="7" width="12" height="12" rx="1" fill="#8a1c2b"/><text x="3" y="16.500" font-size="10" font-weight="700" fill="#fff">A</text></svg>
    </div>
    <div class="flex h-[45px] w-[41px] flex-col items-center justify-center">
      <svg class="h-[24px] w-[22px]" viewBox="0 0 22 24"><path d="M11 0l6 18H5z" fill="#f48b1f"/><path d="M9 5h4l1 4H8z M7 12h8l1 4H6z" fill="#f6f6f6"/><path d="M3 18h16l2 6H1z" fill="#e87e12"/></svg>
      <span class="mt-[2px] h-[2px] w-[6px] rounded bg-[#888]"></span>
    </div>
    <div class="flex h-[45px] w-[41px] flex-col items-center justify-center">
      <svg class="h-[24px] w-[24px]" viewBox="0 0 24 24"><rect width="24" height="24" rx="1" fill="#23393e"/><path d="M9 4l4 4-3 3-4-4z" fill="#e7f5ef"/><path d="M13 9l5 5-5 6-4-5z" fill="#5fe0c0"/></svg>
      <span class="mt-[2px] h-[2px] w-[6px] rounded bg-[#888]"></span>
    </div>
  </div>
  <svg class="ml-[66px] h-[7px] w-[11px]" viewBox="0 0 11 7" fill="none" stroke="#222" stroke-width="1.400"><path d="M1 6l4.500-5L10 6"/></svg>
  <svg class="ml-[19px] h-[18px] w-[12px]" viewBox="0 0 12 18" fill="none" stroke="#b8474f" stroke-width="1.300"><rect x="3.500" y="1" width="5" height="10" rx="2.500"/><path d="M1 8c0 4 2 6 5 6s5-2 5-6M6 14v3"/></svg>
  <div class="ml-[11px] w-[36px] text-center text-[11.500px] leading-[18px] text-[#333]">ENG<br>US</div>
  <svg class="ml-[11px] h-[17px] w-[16px]" viewBox="0 0 16 17" fill="none" stroke="#333"><circle cx="8" cy="8.500" r="7"/><path d="M1 8.500h14M8 1.500c-4 4-4 10 0 14M8 1.500c4 4 4 10 0 14"/><circle cx="12" cy="13" r="3.500" fill="#f0f0f0"/><path d="M10 15l4-4"/></svg>
  <svg class="ml-[6px] h-[14px] w-[15px]" viewBox="0 0 15 14" fill="none" stroke="#333"><path d="M1 5h3l4-4v12L4 9H1zM10 4c1.500 2 1.500 4 0 6M12.500 2c2.500 3 2.500 7 0 10"/></svg>
  <svg class="ml-[7px] h-[14px] w-[16px]" viewBox="0 0 16 14" fill="none" stroke="#333"><path d="M1 4h12v8H1zM13 6.500h2v3h-2M5 4V1"/></svg>
  <div class="ml-[5px] w-[68px] text-right text-[11px] leading-[18px] whitespace-nowrap text-[#333]">09:52 PM<br>23/11/2025</div>
  <svg class="ml-[8px] h-[18px] w-[12px]" viewBox="0 0 12 18"><path d="M6 1c3 0 4 2 4 5v5l2 2H0l2-2V6c0-3 1-5 4-5z" fill="#222"/><circle cx="6" cy="16" r="1.500" fill="#222"/></svg>
</footer>

</body>
</html>
